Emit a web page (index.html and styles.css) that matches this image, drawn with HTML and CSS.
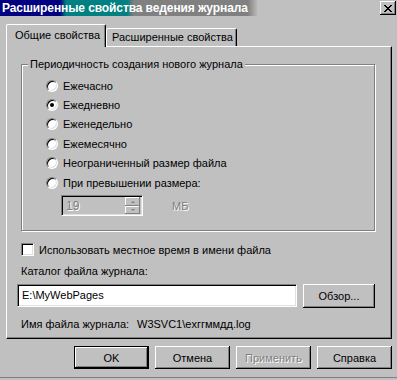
FILE: index.html
```html
<!DOCTYPE html>
<html lang="ru">
<head>
    <meta charset="UTF-8">
    <meta name="viewport" content="width=device-width, initial-scale=1.0">
    <title>Расширенные свойства ведения журнала</title>
    <link rel="stylesheet" href="styles.css">
</head>
<body>
    <div class="window">
        <div class="titlebar">
            <span class="title">Расширенные свойства ведения журнала</span>
            <span class="close">
                <svg width="8" height="7" viewBox="0 0 8 7">
                    <path d="M0 0h2v1h-2zM6 0h2v1h-2zM1 1h2v1h-2zM5 1h2v1h-2zM2 2h4v1h-4zM3 3h2v1h-2zM2 4h4v1h-4zM1 5h2v1h-2zM5 5h2v1h-2zM0 6h2v1h-2zM6 6h2v1h-2z" fill="#000"/>
                </svg>
            </span>
        </div>

        <div class="content">
            <div class="tabs">
                <div class="tab active">Общие свойства</div>
                <div class="tab">Расширенные свойства</div>
            </div>

            <div class="panel">
                <div class="group">
                    <div class="group-title">Периодичность создания нового журнала</div>
                    <div class="radio-list">
                        <div class="radio"><span class="radio-box"></span>Ежечасно</div>
                        <div class="radio"><span class="radio-box checked"></span>Ежедневно</div>
                        <div class="radio"><span class="radio-box"></span>Еженедельно</div>
                        <div class="radio"><span class="radio-box"></span>Ежемесячно</div>
                        <div class="radio"><span class="radio-box"></span>Неограниченный размер файла</div>
                        <div class="radio"><span class="radio-box"></span>При превышении размера:</div>
                    </div>
                    <div class="spin-row">
                        <div class="spin">
                            <span class="spin-value">19</span>
                            <div class="spin-btns">
                                <span class="spin-btn"><span class="arrow-up"></span></span>
                                <span class="spin-btn"><span class="arrow-down"></span></span>
                            </div>
                        </div>
                        <span class="unit">МБ</span>
                    </div>
                </div>

                <div class="check">
                    <span class="check-box"></span>
                    Использовать местное время в имени файла
                </div>

                <div class="field-label">Каталог файла журнала:</div>
                <div class="path-row">
                    <div class="edit">E:\MyWebPages</div>
                    <div class="btn browse">Обзор...</div>
                </div>

                <div class="info">
                    <span class="info-label">Имя файла журнала:</span>
                    <span>W3SVC1\exггммдд.log</span>
                </div>
            </div>

            <div class="actions">
                <div class="btn default">OK</div>
                <div class="btn">Отмена</div>
                <div class="btn disabled">Применить</div>
                <div class="btn">Справка</div>
            </div>
        </div>
        <div class="bottom-line"></div>
    </div>
</body>
</html>
```

FILE: styles.css
```css
* {
    box-sizing: border-box;
}

body {
    margin: 0;
    background-color: #c0c0c0;
    font-family: "Liberation Sans", Arial, sans-serif;
    font-size: 11px;
    color: #000;
}

.window {
    width: 397px;
    height: 380px;
}

/* заголовок окна */
.titlebar {
    height: 16px;
    display: flex;
    align-items: center;
    justify-content: space-between;
    padding: 0 1px 0 2px;
    background: linear-gradient(to right,
        #000080 0, #000080 60px,
        #008080 66px, #008080 127px,
        #808080 134px, #808080 248px,
        #c0c0c0 258px);
}

.title {
    color: #fff;
    font-weight: bold;
    font-size: 12px;
    letter-spacing: -0.1px;
    white-space: nowrap;
}

.close {
    width: 16px;
    height: 14px;
    display: flex;
    align-items: center;
    justify-content: center;
    background-color: #c0c0c0;
    box-shadow: inset -1px -1px #000, inset 1px 1px #fff, inset -2px -2px #808080;
}

.content {
    padding: 8px 5px 0 6px;
}

/* вкладки */
.tabs {
    display: flex;
    align-items: flex-end;
    height: 22px;
}

.tab {
    width: 131px;
    height: 18px;
    line-height: 17px;
    padding-left: 5px;
    border-top: 1px solid #fff;
    border-left: 1px solid #fff;
    border-right: 1px solid #000;
    border-radius: 2px 2px 0 0;
    box-shadow: inset -1px 0 #808080;
    white-space: nowrap;
}

.tab.active {
    width: 100px;
    height: 23px;
    line-height: 20px;
    padding-left: 8px;
    margin-bottom: -1px;
    position: relative;
    z-index: 1;
    background-color: #c0c0c0;
}

.panel {
    height: 293px;
    width: 386px;
    padding: 17px 0 0 14px;
    border-top: 1px solid #fff;
    border-left: 1px solid #fff;
    border-right: 1px solid #000;
    border-bottom: 1px solid #000;
    box-shadow: inset -1px -1px #808080;
}

/* группа переключателей */
.group {
    width: 354px;
    height: 167px;
    border: 1px solid #808080;
    box-shadow: 1px 1px 0 #fff, inset 1px 1px 0 #fff;
}

.group-title {
    display: table;
    margin: -7px 0 0 6px;
    padding: 0 2px;
    line-height: 13px;
    background-color: #c0c0c0;
}

.radio-list {
    margin-top: 5px;
    padding-left: 24px;
}

.radio {
    height: 19.4px;
    display: flex;
    align-items: center;
    gap: 5px;
}

.radio-box {
    width: 12px;
    height: 12px;
    border-radius: 50%;
    background-color: #fff;
    border: 1px solid;
    border-color: #808080 #fff #fff #808080;
    box-shadow: inset 1px 1px #000, inset -1px -1px #dfdfdf;
    display: flex;
    align-items: center;
    justify-content: center;
}

.radio-box.checked::after {
    content: "";
    width: 4px;
    height: 4px;
    border-radius: 50%;
    background-color: #000;
}

.spin-row {
    display: flex;
    align-items: center;
    margin: 3px 0 0 39px;
}

.spin {
    width: 82px;
    height: 21px;
    display: flex;
    align-items: center;
    justify-content: space-between;
    padding: 2px;
    border: 1px solid;
    border-color: #808080 #fff #fff #808080;
    box-shadow: inset 1px 1px #000, inset -1px -1px #dfdfdf;
}

.spin-value {
    padding-left: 2px;
    color: #808080;
    text-shadow: 1px 1px 0 #fff;
    font-size: 12px;
}

.spin-btns {
    display: flex;
    flex-direction: column;
    width: 15px;
    height: 17px;
}

.spin-btn {
    flex: 1;
    display: flex;
    align-items: center;
    justify-content: center;
    box-shadow: inset -1px -1px #808080, inset 1px 1px #fff;
}

.arrow-up,
.arrow-down {
    width: 0;
    height: 0;
    border-left: 2px solid transparent;
    border-right: 2px solid transparent;
}

.arrow-up {
    border-bottom: 2px solid #808080;
}

.arrow-down {
    border-top: 2px solid #808080;
}

.unit {
    margin-left: 29px;
    color: #808080;
    text-shadow: 1px 1px 0 #fff;
}

/* флажок */
.check {
    margin-top: 12px;
    height: 13px;
    display: flex;
    align-items: center;
    gap: 5px;
}

.check-box {
    width: 13px;
    height: 13px;
    background-color: #fff;
    border: 1px solid;
    border-color: #808080 #fff #fff #808080;
    box-shadow: inset 1px 1px #000, inset -1px -1px #dfdfdf;
}

.field-label {
    margin-top: 9px;
    line-height: 13px;
}

.path-row {
    display: flex;
    align-items: flex-start;
    margin: 6px 0 0 -4px;
    gap: 6px;
}

.edit {
    width: 280px;
    height: 23px;
    line-height: 21px;
    padding: 0 4px;
    background-color: #fff;
    border: 1px solid;
    border-color: #808080 #fff #fff #808080;
    box-shadow: inset 1px 1px #000, inset -1px -1px #dfdfdf;
}

.info {
    display: flex;
    margin-top: 10px;
    line-height: 13px;
}

.info-label {
    width: 116px;
}

/* кнопки */
.btn {
    width: 75px;
    height: 23px;
    display: flex;
    align-items: center;
    justify-content: center;
    background-color: #c0c0c0;
    box-shadow: inset -1px -1px #000, inset 1px 1px #fff, inset -2px -2px #808080;
}

.btn.browse {
    width: 72px;
    height: 24px;
}

.btn.default {
    border: 1px solid #000;
}

.btn.disabled {
    color: #808080;
    text-shadow: 1px 1px 0 #fff;
}

.actions {
    display: flex;
    justify-content: flex-end;
    gap: 6px;
    margin-top: 7px;
}

.bottom-line {
    margin-top: 8px;
    height: 1px;
    background-color: #808080;
}
```
